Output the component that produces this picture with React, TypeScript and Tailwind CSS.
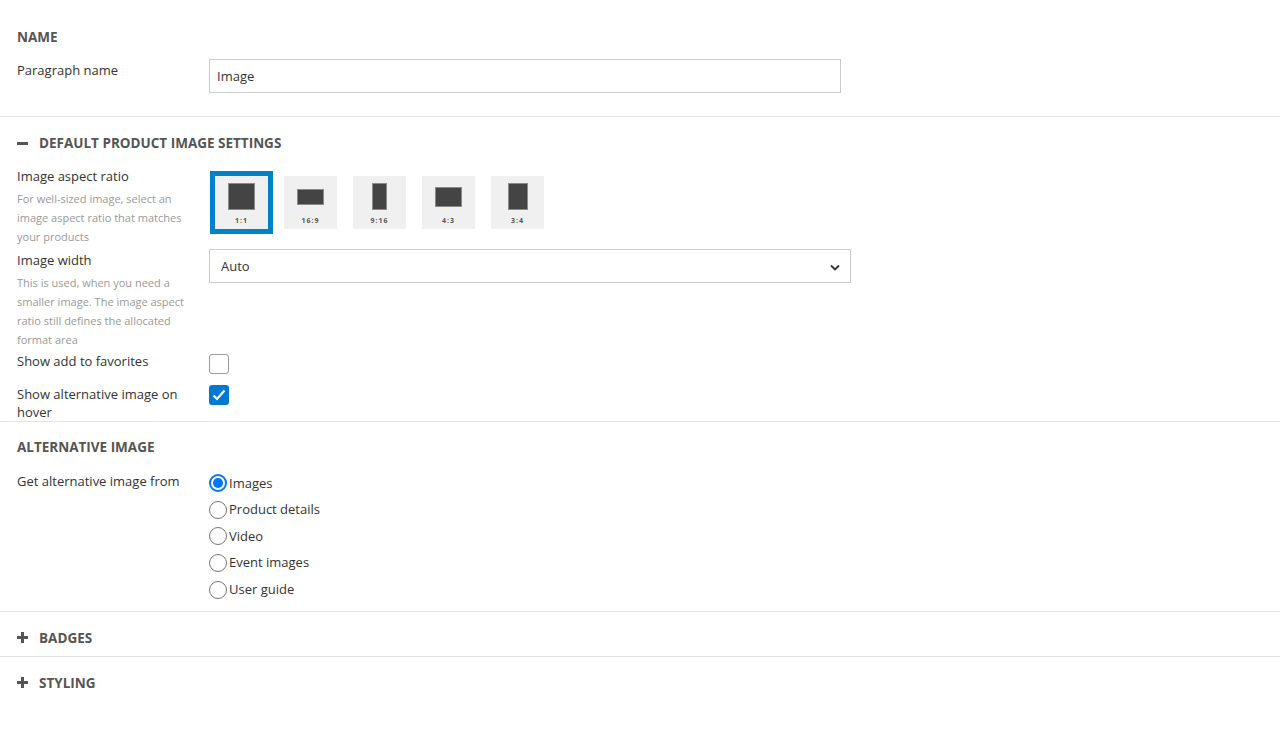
import { useState } from "react";

const FONT = { fontFamily: '"Open Sans", "Noto Sans", Arial, sans-serif' };

interface Ratio {
  label: string;
  w: number;
  h: number;
}

const RATIOS: Ratio[] = [
  { label: "1:1", w: 27, h: 27 },
  { label: "16:9", w: 27, h: 16 },
  { label: "9:16", w: 15, h: 27 },
  { label: "4:3", w: 27, h: 20 },
  { label: "3:4", w: 20, h: 27 },
];

const SOURCES = ["Images", "Product details", "Video", "Event images", "User guide"];

function SectionHeader({ title, icon }: { title: string; icon?: "minus" | "plus" }) {
  return (
    <div className="flex items-center h-[18px] text-[13.5px] font-bold uppercase text-[#555]">
      {icon === "minus" && <span className="w-[11px] h-[3px] bg-[#555] mr-[11px]" />}
      {icon === "plus" && (
        <span className="relative w-[11px] h-[11px] mr-[11px]">
          <span className="absolute left-0 top-[4px] w-[11px] h-[3px] bg-[#555]" />
          <span className="absolute top-0 left-[4px] w-[3px] h-[11px] bg-[#555]" />
        </span>
      )}
      {title}
    </div>
  );
}

function Label({ text, hint, className = "" }: { text: string; hint?: string; className?: string }) {
  return (
    <div className={`w-[192px] shrink-0 pr-[12px] ${className}`}>
      <div className="text-[13px] leading-[18px] text-[#333]">{text}</div>
      {hint && <div className="mt-[4px] text-[11px] leading-[19px] text-[#999]">{hint}</div>}
    </div>
  );
}

function Checkbox({ checked, onChange }: { checked: boolean; onChange: () => void }) {
  return (
    <button
      onClick={onChange}
      className={`w-[20px] h-[20px] rounded-[3px] flex items-center justify-center ${
        checked ? "bg-[#0078d4]" : "border border-[#999] bg-white"
      }`}
    >
      {checked && (
        <svg width="14" height="12" viewBox="0 0 14 12" fill="none">
          <path d="M1.5 6.5 L5 10 L12.5 1.5" stroke="#fff" strokeWidth="2.2" />
        </svg>
      )}
    </button>
  );
}

export default function App() {
  const [ratio, setRatio] = useState("1:1");
  const [favorites, setFavorites] = useState(false);
  const [hover, setHover] = useState(true);
  const [source, setSource] = useState("Images");

  return (
    <div className="min-h-[750px] bg-white text-[#333]" style={FONT}>
      {/* Name */}
      <div className="px-[17px] pt-[28px] pb-[23px] border-b border-[#e3e3e3]">
        <SectionHeader title="Name" />
        <div className="flex mt-[13px]">
          <Label text="Paragraph name" className="pt-[2px]" />
          <div className="w-[632px] h-[34px] border border-[#ccc] flex items-center px-[7px] pt-[2px] text-[13px] text-[#333]">
            Image
          </div>
        </div>
      </div>

      {/* Default product image settings */}
      <div className="px-[17px] pt-[17px] border-b border-[#e3e3e3]">
        <SectionHeader title="Default product image settings" icon="minus" />

        <div className="flex items-start mt-[15px]">
          <Label
            text="Image aspect ratio"
            hint="For well-sized image, select an image aspect ratio that matches your products"
          />
          <div className="flex gap-[16px] pt-[9px] pl-[6px]">
            {RATIOS.map((r) => (
              <button
                key={r.label}
                onClick={() => setRatio(r.label)}
                className={`w-[53px] h-[53px] bg-[#f0f0f0] flex flex-col items-center ${
                  ratio === r.label ? "outline-[5px] outline-solid outline-[#0082c9]" : ""
                }`}
              >
                <div className="h-[41px] flex items-center justify-center">
                  <div
                    className="bg-[#444] border border-[#8a8a8a]"
                    style={{ width: r.w, height: r.h }}
                  />
                </div>
                <div className="text-[7px] leading-[8px] font-bold text-[#555] tracking-[1px]">{r.label}</div>
              </button>
            ))}
          </div>
        </div>

        <div className="flex items-start mt-[3px]">
          <Label
            text="Image width"
            hint="This is used, when you need a smaller image. The image aspect ratio still defines the allocated format area"
            className="pt-[2px]"
          />
          <div className="w-[642px] h-[34px] border border-[#ccc] flex items-center justify-between pl-[11px] pr-[10px] pt-[2px] text-[13px]">
            <span>Auto</span>
            <svg width="10" height="7" viewBox="0 0 10 7" fill="none">
              <path d="M1 1.5 L5 5.5 L9 1.5" stroke="#333" strokeWidth="1.8" />
            </svg>
          </div>
        </div>

        <div className="flex items-start mt-[3px]">
          <Label text="Show add to favorites" />
          <div className="pt-[2px]">
            <Checkbox checked={favorites} onChange={() => setFavorites(!favorites)} />
          </div>
        </div>

        <div className="flex items-start mt-[11px]">
          <Label text="Show alternative image on hover" />
          <div>
            <Checkbox checked={hover} onChange={() => setHover(!hover)} />
          </div>
        </div>
      </div>

      {/* Alternative image */}
      <div className="px-[17px] pt-[16px] pb-[8px] border-b border-[#e3e3e3]">
        <SectionHeader title="Alternative image" />
        <div className="flex items-start mt-[14px]">
          <Label text="Get alternative image from" className="pt-[2px]" />
          <div className="flex flex-col">
            {SOURCES.map((s) => (
              <button
                key={s}
                onClick={() => setSource(s)}
                className="h-[26.6px] flex items-center text-[13px] text-[#333] text-left"
              >
                <span
                  className={`w-[18px] h-[18px] rounded-full flex items-center justify-center mr-[2px] ${
                    source === s ? "border-2 border-[#0075ff]" : "border border-[#767676]"
                  }`}
                >
                  {source === s && <span className="w-[10px] h-[10px] rounded-full bg-[#0075ff]" />}
                </span>
                {s}
              </button>
            ))}
          </div>
        </div>
      </div>

      {/* Badges */}
      <div className="px-[17px] pt-[17px] pb-[9px] border-b border-[#e3e3e3]">
        <SectionHeader title="Badges" icon="plus" />
      </div>

      {/* Styling */}
      <div className="px-[17px] pt-[17px] pb-[10px]">
        <SectionHeader title="Styling" icon="plus" />
      </div>
    </div>
  );
}
